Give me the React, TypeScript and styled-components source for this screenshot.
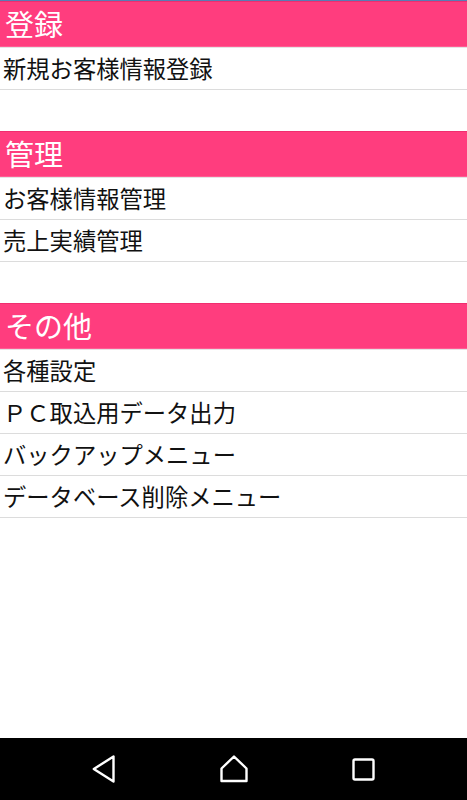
import React from 'react';
import styled, { createGlobalStyle } from 'styled-components';

const GlobalStyle = createGlobalStyle`
    html, body {
        margin: 0;
        padding: 0;
        background: #ffffff;
    }
    body {
        font-family: "Noto Sans CJK JP", "Noto Sans", sans-serif;
    }
`;

const Screen = styled.div`
    width: 467px;
    height: 800px;
    display: flex;
    flex-direction: column;
    overflow: hidden;
`;

const TopEdge = styled.div`
    height: 1px;
    background: #5a7cb4;
`;

const Content = styled.div`
    flex: 1;
    display: flex;
    flex-direction: column;
`;

const Section = styled.section`
    display: flex;
    flex-direction: column;
`;

const Spacer = styled.div`
    height: 41px;
`;

const Header = styled.h2`
    margin: 0;
    height: 46px;
    box-sizing: border-box;
    padding-left: 5px;
    display: flex;
    align-items: center;
    background: #ff3d7e;
    border-top: 1px solid #f02e6f;
    border-bottom: 1px solid #ff5c93;
    color: #ffffff;
    font-size: 29px;
    font-weight: 400;
    line-height: 1;
    padding-bottom: 2px;
`;

const List = styled.ul`
    list-style: none;
    margin: 0;
    padding: 0;
    border-top: 1px solid #e4e4e4;
`;

const Item = styled.li`
    height: 42px;
    box-sizing: border-box;
    border-bottom: 1px solid #dcdcdc;
    padding-left: 3px;
    display: flex;
    align-items: center;
    color: #111111;
    font-size: 23.3px;
    line-height: 1;
`;

const NavBar = styled.nav`
    height: 62px;
    background: #000000;
    display: flex;
    justify-content: center;
    align-items: center;
`;

const NavButton = styled.div`
    width: 130px;
    display: flex;
    justify-content: center;
    align-items: center;
`;

const sections = [
    { title: '登録', items: ['新規お客様情報登録'] },
    { title: '管理', items: ['お客様情報管理', '売上実績管理'] },
    {
        title: 'その他',
        items: ['各種設定', 'ＰＣ取込用データ出力', 'バックアップメニュー', 'データベース削除メニュー'],
    },
];

const App = () => (
    <Screen>
        <GlobalStyle />
        <TopEdge />
        <Content>
            {sections.map((s, i) => (
                <Section key={s.title}>
                    {i > 0 && <Spacer />}
                    <Header>{s.title}</Header>
                    <List>
                        {s.items.map((item) => (
                            <Item key={item}>{item}</Item>
                        ))}
                    </List>
                </Section>
            ))}
        </Content>
        <NavBar>
            <NavButton>
                <svg width="24" height="28" viewBox="0 0 24 28">
                    <path d="M21.5 1.5 L21.5 26.5 L1.8 14 Z" fill="none" stroke="#fff" strokeWidth="2.4" strokeLinejoin="round" />
                </svg>
            </NavButton>
            <NavButton>
                <svg width="28" height="28" viewBox="0 0 28 28">
                    <path d="M1.5 13.5 L14 1.5 L26.5 13.5 L26.5 26 L1.5 26 Z" fill="none" stroke="#fff" strokeWidth="2.4" strokeLinejoin="round" />
                </svg>
            </NavButton>
            <NavButton>
                <svg width="23" height="23" viewBox="0 0 23 23">
                    <rect x="1.5" y="1.5" width="20" height="20" rx="1.5" fill="none" stroke="#fff" strokeWidth="2.4" />
                </svg>
            </NavButton>
        </NavBar>
    </Screen>
);

export default App;
